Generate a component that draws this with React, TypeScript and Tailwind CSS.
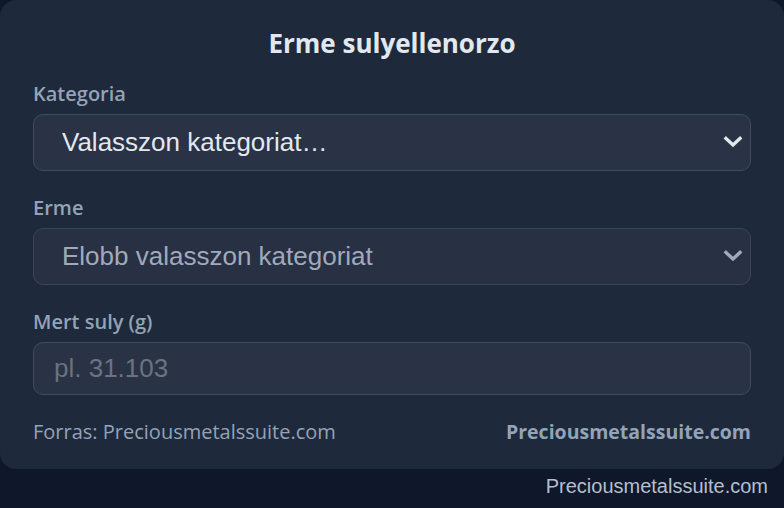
import React from "react";

function Chevron({ className }: { className?: string }) {
  return (
    <svg
      className={className}
      width="20"
      height="14"
      viewBox="0 0 20 14"
      fill="none"
      stroke="currentColor"
      strokeWidth="3.4"
      strokeLinecap="square"
      strokeLinejoin="miter"
    >
      <path d="M3 3.5 L10 10 L17 3.5" />
    </svg>
  );
}

export default function App() {
  return (
    <div className="min-h-[508px] w-[784px] bg-[#0f172a] font-['Open_Sans',sans-serif]">
      <div className="rounded-[16px] bg-[#1e293b] px-[33px] pt-[27px] pb-[24px]">
        <h1 className="text-center text-[26px] font-bold leading-[32px] text-[#e2e8f0]">
          Erme sulyellenorzo
        </h1>

        <label className="mt-[21px] block text-[20px] font-semibold leading-[28px] text-[#94a3b8]">
          Kategoria
        </label>
        <div className="relative mt-[6px]">
          <select
            defaultValue=""
            className="block h-[57px] w-full appearance-none rounded-[10px] border border-[#414b5e] bg-[#2a3245] pl-[28px] font-['Liberation_Sans',Arial,sans-serif] text-[26px] text-[#e2e8f0] outline-none"
          >
            <option value="">Valasszon kategoriat…</option>
          </select>
          <Chevron className="pointer-events-none absolute right-[8px] top-[21px] text-[#e2e8f0]" />
        </div>

        <label className="mt-[23px] block text-[20px] font-semibold leading-[28px] text-[#94a3b8]">
          Erme
        </label>
        <div className="relative mt-[6px]">
          <select
            disabled
            defaultValue=""
            className="block h-[57px] w-full appearance-none rounded-[10px] border border-[#3b4558] bg-[#283043] pl-[28px] font-['Liberation_Sans',Arial,sans-serif] text-[26px] text-[#a0aabb] outline-none"
          >
            <option value="">Elobb valasszon kategoriat</option>
          </select>
          <Chevron className="pointer-events-none absolute right-[8px] top-[21px] text-[#a0aabb]" />
        </div>

        <label className="mt-[23px] block text-[20px] font-semibold leading-[28px] text-[#94a3b8]">
          Mert suly (g)
        </label>
        <input
          type="text"
          placeholder="pl. 31.103"
          className="mt-[6px] block h-[53px] w-full rounded-[10px] border border-[#414b5e] bg-[#2a3245] px-[20px] font-['Liberation_Sans',Arial,sans-serif] text-[26px] text-[#e2e8f0] outline-none placeholder:text-[#6b7280]"
        />

        <div className="mt-[24px] flex items-center justify-between text-[20px] leading-[26px] text-[#94a3b8]">
          <span>Forras: Preciousmetalssuite.com</span>
          <span className="text-[19.5px] font-bold">Preciousmetalssuite.com</span>
        </div>
      </div>
      <div className="pr-[16px] pt-[5px] text-right font-['Liberation_Sans',Arial,sans-serif] text-[20px] leading-[24px] text-[#b4bfcf]">
        Preciousmetalssuite.com
      </div>
    </div>
  );
}
